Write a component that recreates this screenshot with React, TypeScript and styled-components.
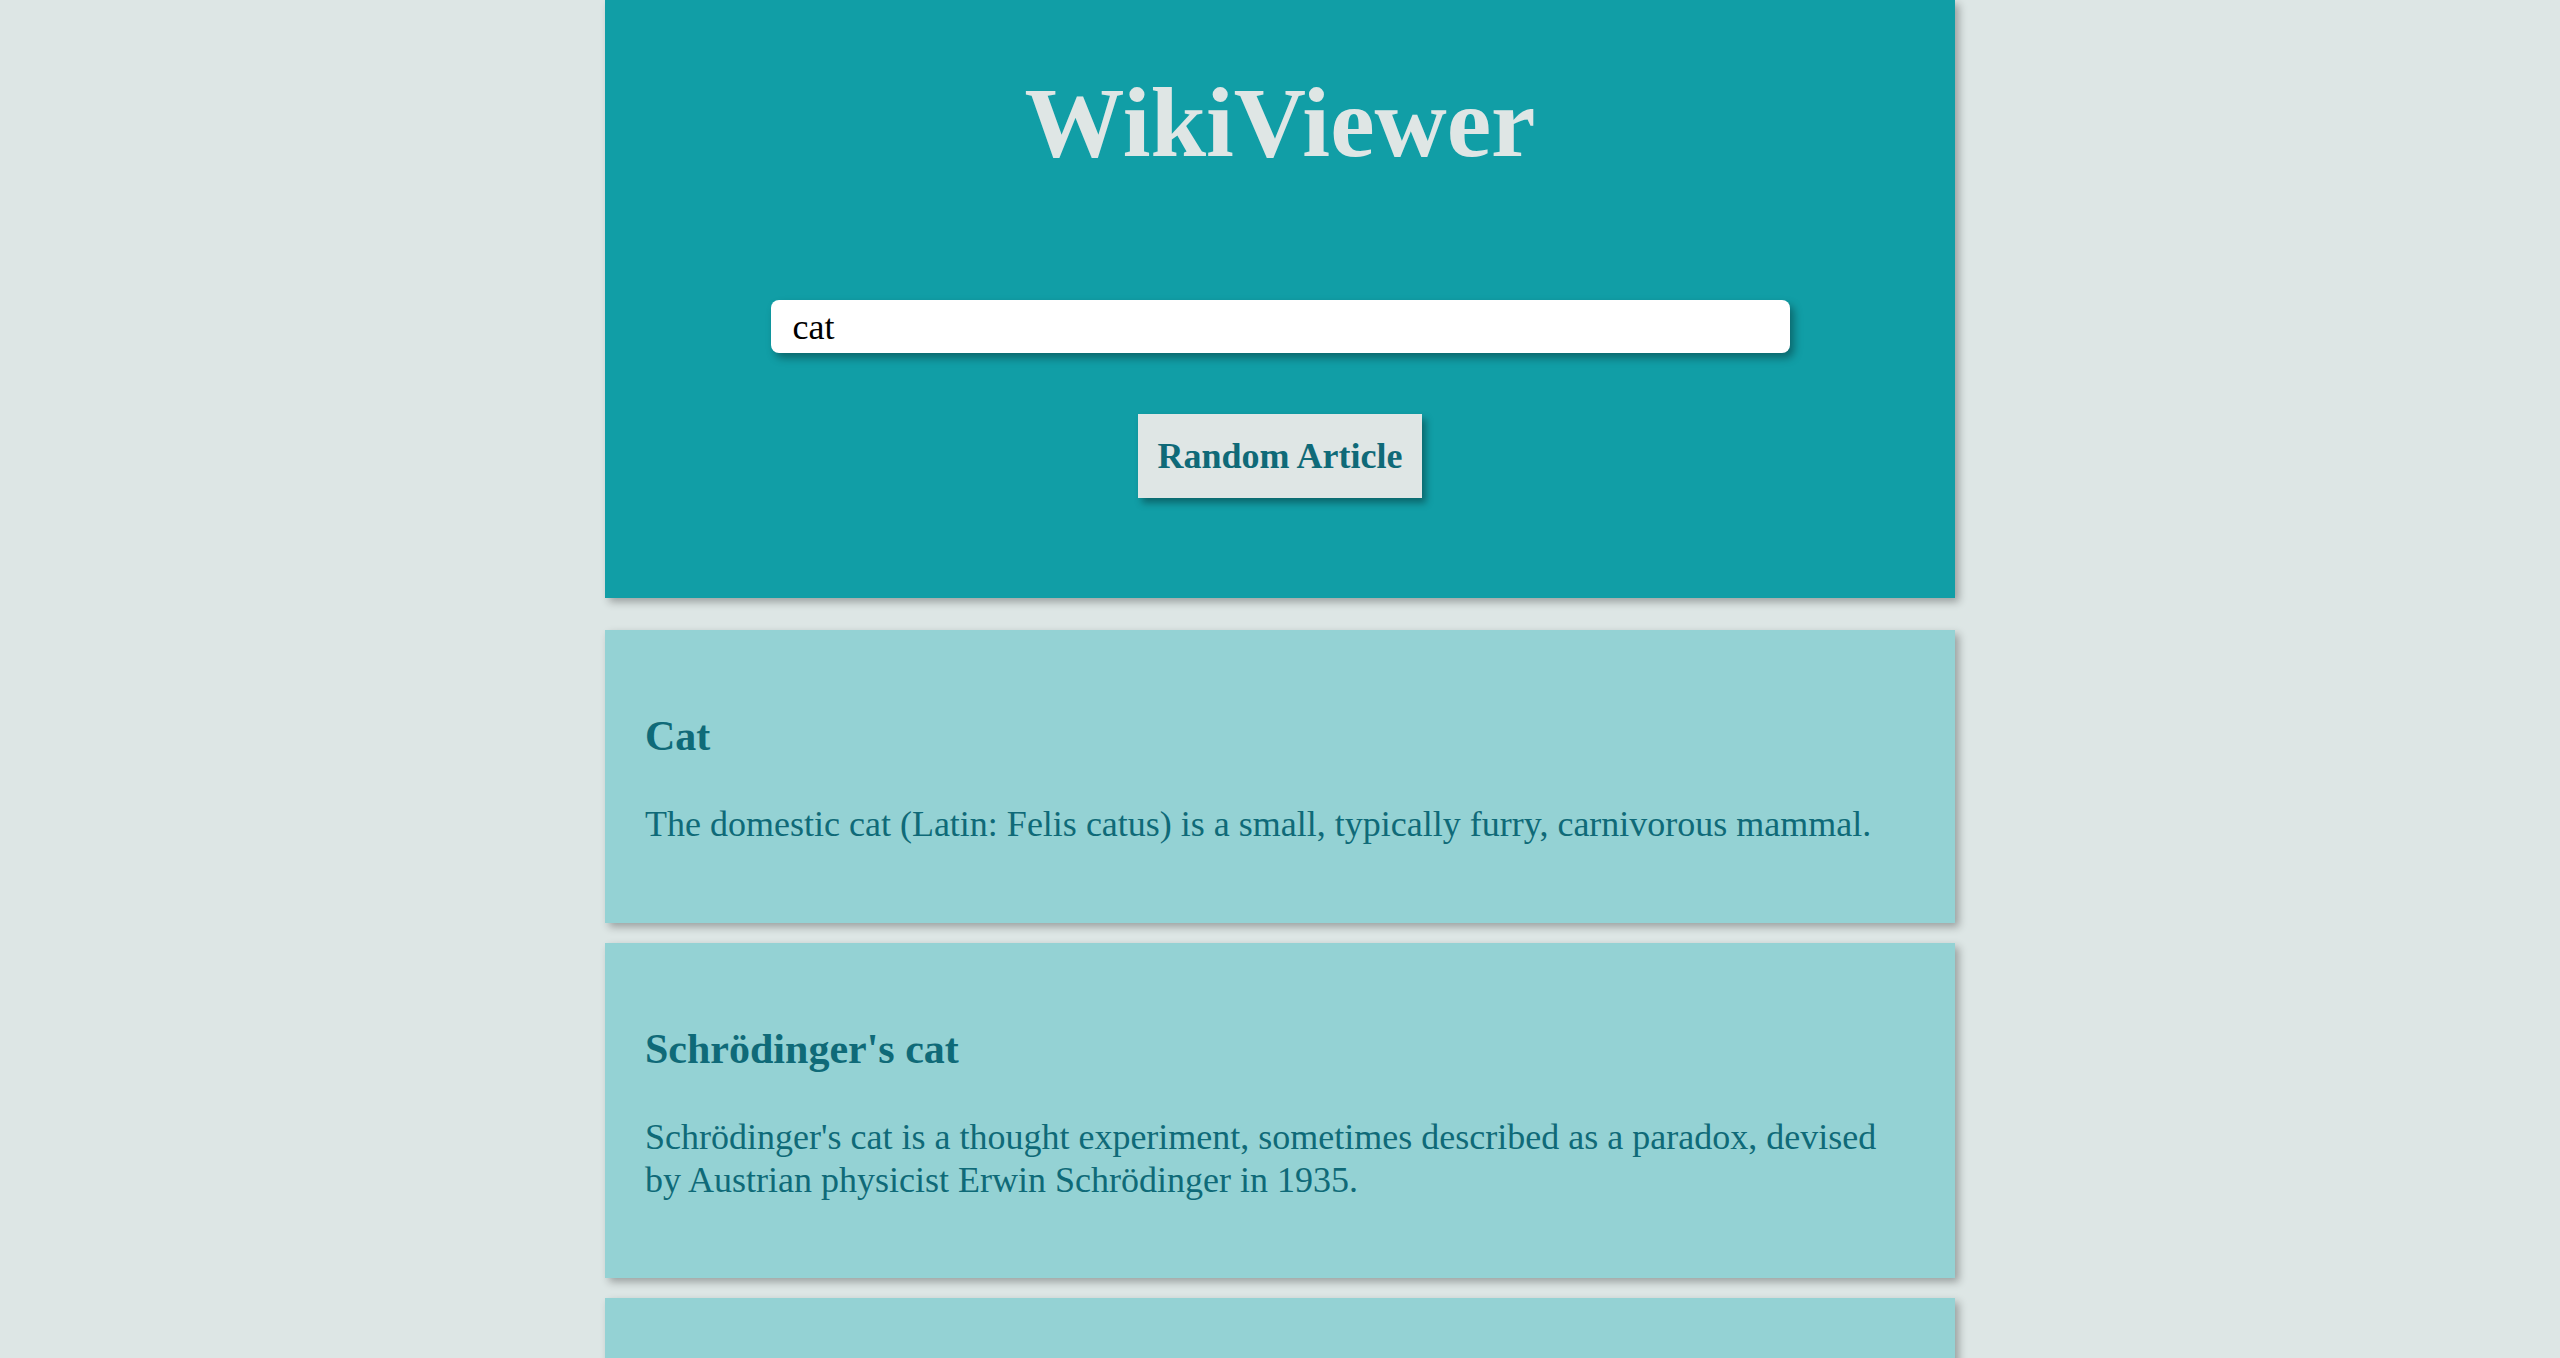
import React, { useState } from "react";
import styled, { createGlobalStyle } from "styled-components";

const GlobalStyle = createGlobalStyle`
  html, body {
    margin: 0;
    padding: 0;
    background: #dde6e5;
  }
  body {
    font-family: "Liberation Serif", "Times New Roman", serif;
    font-size: 36px;
    color: #0f6a78;
  }
  * { box-sizing: border-box; }
`;

const Page = styled.div`
  width: 1350px;
  margin: 0 auto;
  display: flex;
  flex-direction: column;
`;

const Header = styled.header`
  background: #119ea6;
  height: 598px;
  display: flex;
  flex-direction: column;
  align-items: center;
  box-shadow: 4px 4px 8px rgba(0, 0, 0, 0.3);
`;

const Title = styled.h1`
  margin: 65px 0 0;
  font-size: 100px;
  font-weight: 700;
  line-height: normal;
  color: #dfe6e5;
`;

const SearchInput = styled.input`
  margin-top: 120px;
  width: 1019px;
  height: 53px;
  padding: 0 22px;
  border: none;
  border-radius: 8px;
  background: #ffffff;
  font-family: "Liberation Serif", "Times New Roman", serif;
  font-size: 36px;
  color: #000;
  outline: none;
  box-shadow: 4px 5px 8px rgba(0, 0, 0, 0.35);
`;

const RandomButton = styled.button`
  margin-top: 61px;
  padding: 21px 20px;
  border: none;
  background: #dfe6e5;
  font-family: "Liberation Serif", "Times New Roman", serif;
  font-size: 36px;
  font-weight: 700;
  line-height: normal;
  color: #0f6a78;
  cursor: pointer;
  box-shadow: 4px 5px 7px rgba(0, 0, 0, 0.35);
`;

const Results = styled.main`
  margin-top: 32px;
  display: flex;
  flex-direction: column;
  gap: 20px;
  padding-bottom: 20px;
`;

const Card = styled.article`
  background: #94d2d4;
  padding: 39px 40px 40px;
  box-shadow: 4px 4px 8px rgba(0, 0, 0, 0.3);
`;

const CardTitle = styled.h3`
  margin: 42px 0;
  font-size: 42px;
  font-weight: 700;
  line-height: 1.2;
  color: #0f6a78;
`;

const CardText = styled.p`
  margin: 36px 0;
  font-size: 36px;
  line-height: 1.2;
  color: #0f6a78;
`;

const results = [
  {
    title: "Cat",
    text: "The domestic cat (Latin: Felis catus) is a small, typically furry, carnivorous mammal.",
  },
  {
    title: "Schrödinger's cat",
    text: "Schrödinger's cat is a thought experiment, sometimes described as a paradox, devised by Austrian physicist Erwin Schrödinger in 1935.",
  },
  {
    title: "Cat (disambiguation)",
    text: "Cat or CAT may refer to a number of things, including animals, people, and technology.",
  },
];

export default function App() {
  const [query, setQuery] = useState("cat");
  return (
    <>
      <GlobalStyle />
      <Page>
        <Header>
          <Title>WikiViewer</Title>
          <SearchInput value={query} onChange={(e) => setQuery(e.target.value)} />
          <RandomButton>Random Article</RandomButton>
        </Header>
        <Results>
          {results.map((r) => (
            <Card key={r.title}>
              <CardTitle>{r.title}</CardTitle>
              <CardText>{r.text}</CardText>
            </Card>
          ))}
        </Results>
      </Page>
    </>
  );
}
